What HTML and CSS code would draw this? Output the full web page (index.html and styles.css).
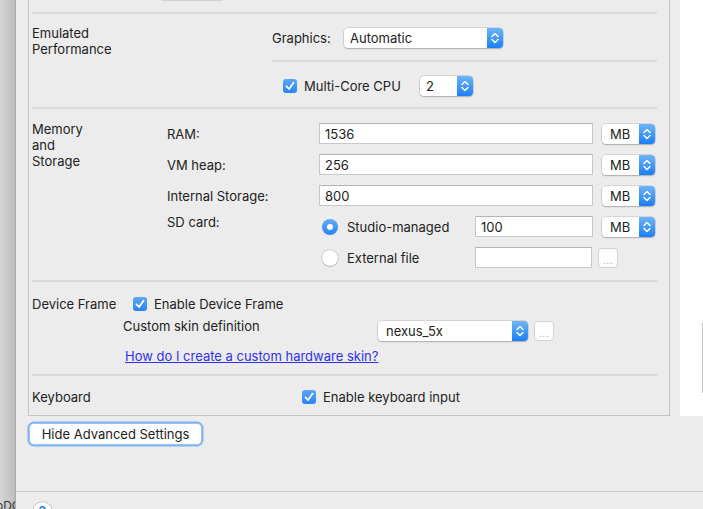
FILE: index.html
```html
<!DOCTYPE html>
<html>
<head>
<meta charset="utf-8">
<link rel="stylesheet" href="styles.css">
</head>
<body>
<div class="app">
  <div class="backwin"><span class="backtext">oDC</span></div>
  <div class="dialog">
    <div class="main">
      <div class="leftcol">
        <div class="panel">
          <div class="stub"><div class="stub-btn"></div></div>

          <div class="section perf">
            <div class="sec-label">Emulated<br>Performance</div>
            <div class="perf-right">
              <div class="perf-row first">
                <span class="graphics-label">Graphics:</span>
                <div class="popup w-auto"><span class="popup-text pad6">Automatic</span><span class="stepper"><svg width="10" height="14" viewBox="0 0 10 14"><path d="M2 5.5 L5 2.5 L8 5.5 M2 8.5 L5 11.5 L8 8.5" fill="none" stroke="#fff" stroke-width="1.5" stroke-linecap="round" stroke-linejoin="round"/></svg></span></div>
              </div>
              <div class="perf-row second">
                <span class="check"><svg width="14" height="14" viewBox="0 0 14 14"><path d="M3.5 7.3 L6 10 L10.5 3.8" fill="none" stroke="#fff" stroke-width="1.8" stroke-linecap="round" stroke-linejoin="round"/></svg></span>
                <span class="check-text cpu-text">Multi-Core CPU</span>
                <div class="popup w-cpu"><span class="popup-text pad6">2</span><span class="stepper"><svg width="10" height="14" viewBox="0 0 10 14"><path d="M2 5.5 L5 2.5 L8 5.5 M2 8.5 L5 11.5 L8 8.5" fill="none" stroke="#fff" stroke-width="1.5" stroke-linecap="round" stroke-linejoin="round"/></svg></span></div>
              </div>
            </div>
          </div>

          <div class="section memory">
            <div class="sec-label mem-label">Memory<br>and<br>Storage</div>

            <span class="field-label">RAM:</span>
            <div class="field-row">
              <input class="field w-wide" type="text" value="1536" readonly>
              <div class="popup w-mb"><span class="popup-text">MB</span><span class="stepper"><svg width="10" height="14" viewBox="0 0 10 14"><path d="M2 5.5 L5 2.5 L8 5.5 M2 8.5 L5 11.5 L8 8.5" fill="none" stroke="#fff" stroke-width="1.5" stroke-linecap="round" stroke-linejoin="round"/></svg></span></div>
            </div>

            <span class="field-label">VM heap:</span>
            <div class="field-row">
              <input class="field w-wide" type="text" value="256" readonly>
              <div class="popup w-mb"><span class="popup-text">MB</span><span class="stepper"><svg width="10" height="14" viewBox="0 0 10 14"><path d="M2 5.5 L5 2.5 L8 5.5 M2 8.5 L5 11.5 L8 8.5" fill="none" stroke="#fff" stroke-width="1.5" stroke-linecap="round" stroke-linejoin="round"/></svg></span></div>
            </div>

            <span class="field-label">Internal Storage:</span>
            <div class="field-row">
              <input class="field w-wide" type="text" value="800" readonly>
              <div class="popup w-mb"><span class="popup-text">MB</span><span class="stepper"><svg width="10" height="14" viewBox="0 0 10 14"><path d="M2 5.5 L5 2.5 L8 5.5 M2 8.5 L5 11.5 L8 8.5" fill="none" stroke="#fff" stroke-width="1.5" stroke-linecap="round" stroke-linejoin="round"/></svg></span></div>
            </div>

            <span class="field-label sd-label">SD card:</span>
            <div class="field-row">
              <span class="radio-opt"><span class="radio on"></span><span>Studio-managed</span></span>
              <input class="field w-sd" type="text" value="100" readonly>
              <div class="popup w-mb"><span class="popup-text">MB</span><span class="stepper"><svg width="10" height="14" viewBox="0 0 10 14"><path d="M2 5.5 L5 2.5 L8 5.5 M2 8.5 L5 11.5 L8 8.5" fill="none" stroke="#fff" stroke-width="1.5" stroke-linecap="round" stroke-linejoin="round"/></svg></span></div>
            </div>

            <span class="field-label empty"></span>
            <div class="field-row">
              <span class="radio-opt"><span class="radio"></span><span>External file</span></span>
              <input class="field w-ext" type="text" value="" readonly>
              <span class="dots-btn">...</span>
            </div>
          </div>

          <div class="section frame">
            <div class="frame-row">
              <span class="frame-label">Device Frame</span>
              <span class="check"><svg width="14" height="14" viewBox="0 0 14 14"><path d="M3.5 7.3 L6 10 L10.5 3.8" fill="none" stroke="#fff" stroke-width="1.8" stroke-linecap="round" stroke-linejoin="round"/></svg></span>
              <span class="check-text">Enable Device Frame</span>
            </div>
            <div class="skin-row">
              <span class="skin-label">Custom skin definition</span>
              <div class="popup w-skin"><span class="popup-text">nexus_5x</span><span class="stepper"><svg width="10" height="14" viewBox="0 0 10 14"><path d="M2 5.5 L5 2.5 L8 5.5 M2 8.5 L5 11.5 L8 8.5" fill="none" stroke="#fff" stroke-width="1.5" stroke-linecap="round" stroke-linejoin="round"/></svg></span></div>
              <span class="dots-btn">...</span>
            </div>
            <a class="skin-link" href="#">How do I create a custom hardware skin?</a>
          </div>

          <div class="section keyboard">
            <div class="frame-row">
              <span class="kb-label">Keyboard</span>
              <span class="check"><svg width="14" height="14" viewBox="0 0 14 14"><path d="M3.5 7.3 L6 10 L10.5 3.8" fill="none" stroke="#fff" stroke-width="1.8" stroke-linecap="round" stroke-linejoin="round"/></svg></span>
              <span class="check-text">Enable keyboard input</span>
            </div>
          </div>
        </div>
        <button class="hide-btn" type="button">Hide Advanced Settings</button>
      </div>
      <div class="preview"><div class="preview-edge"></div></div>
    </div>
    <div class="footer"><span class="help">?</span></div>
  </div>
</div>
</body>
</html>
```

FILE: styles.css
```css
html, body {
  margin: 0;
  padding: 0;
}
body {
  width: 703px;
  height: 509px;
  overflow: hidden;
  background: #ececec;
  font-family: Inter, "Liberation Sans", sans-serif;
  font-size: 13px;
  color: #222;
}
.app {
  display: flex;
  height: 509px;
  overflow: hidden;
}
.backwin {
  width: 15px;
  flex: none;
  background: linear-gradient(to right, #d6d6d6, #bdbdbd);
  border-right: 1px solid #a9a9a9;
  display: flex;
  flex-direction: column;
  justify-content: flex-end;
  overflow: hidden;
}
.backtext {
  font-size: 12px;
  line-height: 12px;
  margin-left: -4px;
  margin-bottom: -3px;
  color: #333;
  white-space: nowrap;
}
.dialog {
  flex: 1;
  min-width: 0;
  display: flex;
  flex-direction: column;
}
.main {
  height: 491px;
  flex: none;
  display: flex;
  gap: 10px;
  padding-left: 12px;
}
.leftcol {
  width: 642px;
  flex: none;
  display: flex;
  flex-direction: column;
  align-items: flex-start;
}
.panel {
  width: 642px;
  box-sizing: border-box;
  height: 416px;
  border: 1px solid #c3c3c3;
  border-top: none;
  padding: 0 12px 0 3px;
}
.stub {
  height: 12px;
}
.stub-btn {
  margin-left: 129px;
  width: 62px;
  height: 1px;
  background: #d2d2d2;
  border-radius: 0 0 3px 3px;
}
.section {
  border-top: 2px solid #dadada;
}
.sec-label {
  line-height: 16px;
}

/* Emulated performance */
.perf {
  display: grid;
  grid-template-columns: 240px 1fr;
}
.perf .sec-label {
  padding-top: 11px;
}
.perf-row {
  display: flex;
  align-items: center;
  height: 20px;
}
.perf-row.first {
  padding: 14px 0 12px;
  border-bottom: 2px solid #dadada;
}
.perf-row.second {
  padding: 14px 0 11px;
}
.graphics-label {
  width: 72px;
}
.perf-row.second .check {
  margin-left: 11px;
}
.check-text {
  margin-left: 7px;
  white-space: nowrap;
}
.cpu-text {
  width: 95px;
}
.perf-row.second .popup {
  margin-left: 21px;
}

/* popups */
.popup {
  display: flex;
  align-items: center;
  height: 20px;
  box-sizing: border-box;
  background: #fff;
  border-radius: 4px;
  box-shadow: 0 0 0 0.5px rgba(0,0,0,0.18), 0 1px 1.5px rgba(0,0,0,0.2);
}
.popup-text {
  flex: 1;
  padding-left: 8px;
}
.popup-text.pad6 {
  padding-left: 6px;
}
.stepper {
  width: 16px;
  height: 20px;
  display: flex;
  align-items: center;
  justify-content: center;
  background: linear-gradient(#6db4fb, #1b7ff7);
  border-radius: 0 4px 4px 0;
}
.w-auto { width: 159px; }
.w-cpu { width: 53px; }
.w-mb { width: 53px; }
.w-skin { width: 150px; }

.check {
  width: 14px;
  height: 14px;
  flex: none;
  border-radius: 3px;
  background: linear-gradient(#5ba8fa, #2b83f6);
  display: flex;
}

/* memory */
.memory {
  display: grid;
  grid-template-columns: 135px 152px 1fr;
  grid-auto-rows: 21px;
  row-gap: 10px;
  padding: 14px 0 12px;
}
.mem-label {
  grid-row: 1 / span 5;
  grid-column: 1;
  margin-top: -2px;
}
.field-label {
  grid-column: 2;
  align-self: center;
  line-height: 16px;
}
.sd-label {
  align-self: start;
  margin-top: -2px;
}
.field-row {
  grid-column: 3;
  display: flex;
  align-items: center;
}
.field {
  height: 21px;
  box-sizing: border-box;
  margin: 0;
  padding: 0 0 0 5px;
  border: 1px solid #c8c8c8;
  border-top-color: #b4b4b4;
  border-radius: 0;
  background: #fff;
  font: inherit;
  color: inherit;
  outline: none;
}
.w-wide { width: 274px; margin-right: 9px; }
.w-sd { width: 118px; margin-right: 9px; }
.w-ext { width: 117px; margin-right: 6px; }
.radio-opt {
  width: 156px;
  display: flex;
  align-items: center;
}
.radio {
  width: 16px;
  height: 16px;
  box-sizing: border-box;
  margin-left: 3px;
  margin-right: 9px;
  border-radius: 50%;
  background: #fff;
  box-shadow: 0 0 0 0.5px rgba(0,0,0,0.25), 0 1px 1px rgba(0,0,0,0.15);
  display: flex;
  align-items: center;
  justify-content: center;
}
.radio.on {
  background: linear-gradient(#62acfa, #2a82f6);
  box-shadow: none;
}
.radio.on::after {
  content: "";
  width: 6px;
  height: 6px;
  border-radius: 50%;
  background: #fff;
}
.dots-btn {
  width: 20px;
  height: 20px;
  box-sizing: border-box;
  background: #fff;
  border: 1px solid #d2d2d2;
  border-radius: 4px;
  color: #a0a0a0;
  font-size: 10px;
  line-height: 22px;
  text-align: center;
  letter-spacing: 0.5px;
}

/* device frame */
.frame {
  padding: 12px 0 10px;
}
.frame-row {
  display: flex;
  align-items: center;
  height: 20px;
}
.frame-label {
  width: 101px;
  white-space: nowrap;
}
.skin-row {
  display: flex;
  align-items: flex-start;
  margin-top: 7px;
  padding-left: 91px;
}
.skin-label {
  width: 255px;
  line-height: 16px;
  margin-top: -3px;
}
.skin-row .dots-btn {
  margin-left: 6px;
}
.skin-link {
  display: block;
  margin: 7px 0 0 93px;
  line-height: 16px;
  color: #2f2ff7;
  text-decoration: underline;
  width: max-content;
}

/* keyboard */
.keyboard {
  padding: 11px 0 7px;
}
.kb-label {
  width: 270px;
}

.hide-btn {
  margin: 8px 0 0 2px;
  width: 171px;
  height: 20px;
  padding: 0;
  border: none;
  border-radius: 4px;
  background: #fff;
  font: inherit;
  color: inherit;
  box-shadow: 0 0 0 1px #9cc3f3, 0 0 0 2.5px #7eb2f1;
}

.preview {
  width: 40px;
  height: 416px;
  flex: none;
  background: #fff;
  padding-top: 323px;
  box-sizing: border-box;
}
.preview-edge {
  margin-left: 22px;
  width: 10px;
  height: 70px;
  border-left: 1px solid #c8c8c8;
}

.footer {
  flex: 1;
  border-top: 1px solid #c7c7c7;
  padding: 10px 0 0 17px;
}
.help {
  display: block;
  width: 19px;
  height: 19px;
  box-sizing: border-box;
  border-radius: 50%;
  background: #fff;
  box-shadow: 0 0 0 0.5px rgba(0,0,0,0.3), 0 1px 1px rgba(0,0,0,0.15);
  color: #2a7ef5;
  font-weight: bold;
  font-size: 13px;
  line-height: 19px;
  text-align: center;
}
```
